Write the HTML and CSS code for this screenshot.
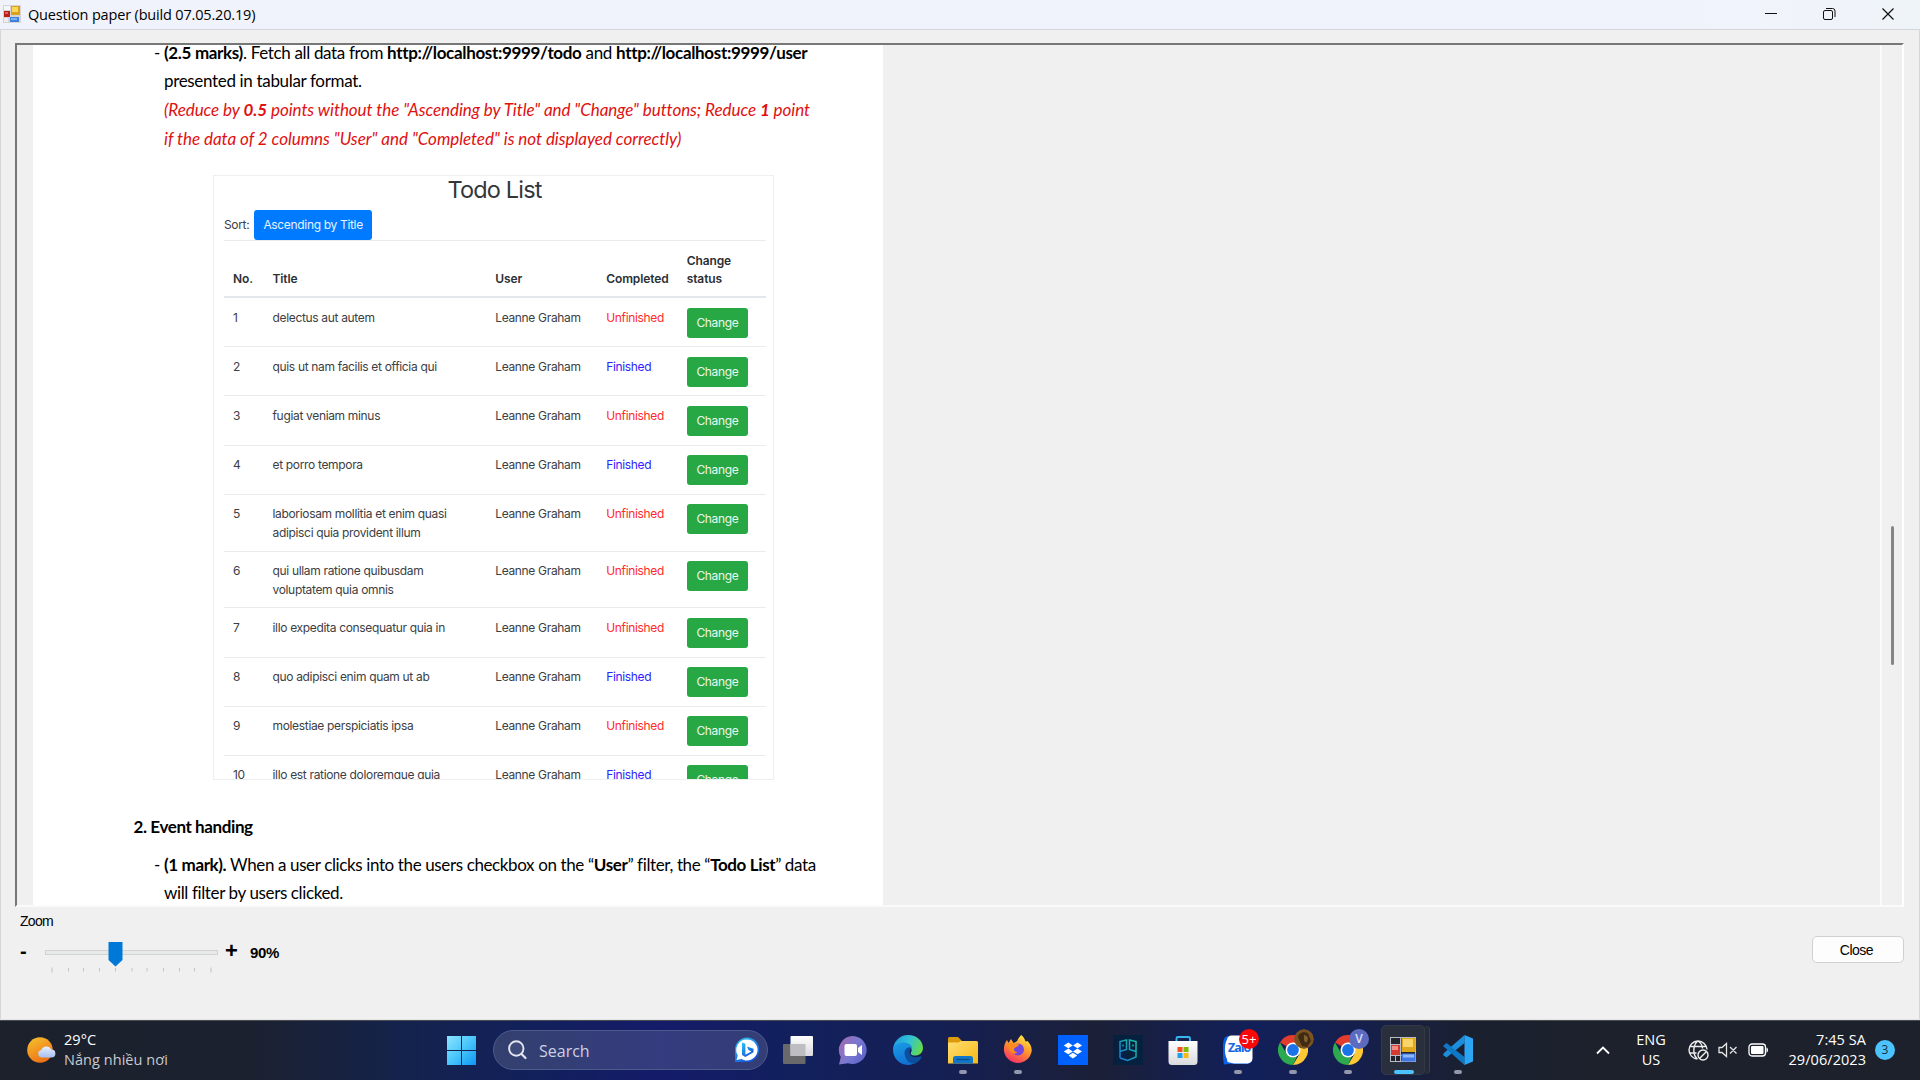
FILE: index.html
```html
<!DOCTYPE html>
<html lang="en">
<head>
<meta charset="utf-8">
<title>Question paper</title>
<link rel="stylesheet" href="styles.css">
</head>
<body>
<div class="window">
  <header class="titlebar">
    <svg class="app-icon" width="18" height="18" viewBox="0 0 18 18">
      <rect width="18" height="18" fill="#d2d4d8"/><rect x="1" y="1" width="6" height="4" fill="#f6f6f8"/><rect x="1" y="13" width="4" height="4" fill="#eee"/>
      <rect x="1" y="6" width="6" height="6" fill="#b8201c"/><rect x="2" y="7" width="3" height="2" fill="#e0645c"/>
      <rect x="8" y="1" width="9" height="9" fill="#dca31a"/><rect x="9" y="2" width="6" height="5" fill="#fbd75a"/>
      <rect x="7" y="12" width="9" height="5" fill="#3f7fe0"/><rect x="8" y="13" width="6" height="2" fill="#7fb0f6"/>
    </svg>
    <span class="caption">Question paper (build 07.05.20.19)</span>
    <svg class="winbtn" width="58" height="28" viewBox="0 0 58 28"><path d="M23 13.500h12" stroke="#111" fill="none"/></svg>
    <svg class="winbtn" width="58" height="28" viewBox="0 0 58 28"><rect x="23.5" y="10.500" width="9" height="9" rx="1.500" stroke="#111" fill="none"/><path d="M26 8.500h6.500a2.500 2.500 0 0 1 2.500 2.500v6" stroke="#111" fill="none"/></svg>
    <svg class="winbtn" width="60" height="28" viewBox="0 0 60 28"><path d="M24.500 8.500l11 11M35.500 8.500l-11 11" stroke="#111" stroke-width="1.200" fill="none"/></svg>
  </header>

  <main class="viewer">
    <div class="page">
      <div class="item first">
        <span class="dash">-</span>
        <div class="lines">
          <p class="l1"><b>(2.5 marks)</b>. Fetch all data from <b>http://localhost:9999/todo</b> and <b>http://localhost:9999/user</b></p>
          <p class="l1">presented in tabular format.</p>
          <p class="note">(Reduce by <b>0.5</b> points without the "Ascending by Title" and "Change" buttons; Reduce <b>1</b> point</p>
          <p class="note">if the data of 2 columns "User" and "Completed" is not displayed correctly)</p>
        </div>
      </div>

      <section class="figure">
        <h1>Todo List</h1>
        <div class="sort"><span>Sort:</span><span class="btn primary">Ascending by Title</span></div>
        <div class="row head"><span>No.</span><span>Title</span><span>User</span><span>Completed</span><span>Change<br>status</span></div>
        <div class="row"><span>1</span><span>delectus aut autem</span><span>Leanne Graham</span><span class="red">Unfinished</span><span class="btn">Change</span></div>
        <div class="row"><span>2</span><span>quis ut nam facilis et officia qui</span><span>Leanne Graham</span><span class="blue">Finished</span><span class="btn">Change</span></div>
        <div class="row"><span>3</span><span>fugiat veniam minus</span><span>Leanne Graham</span><span class="red">Unfinished</span><span class="btn">Change</span></div>
        <div class="row"><span>4</span><span>et porro tempora</span><span>Leanne Graham</span><span class="blue">Finished</span><span class="btn">Change</span></div>
        <div class="row tall"><span>5</span><span>laboriosam mollitia et enim quasi<br>adipisci quia provident illum</span><span>Leanne Graham</span><span class="red">Unfinished</span><span class="btn">Change</span></div>
        <div class="row tall"><span>6</span><span>qui ullam ratione quibusdam<br>voluptatem quia omnis</span><span>Leanne Graham</span><span class="red">Unfinished</span><span class="btn">Change</span></div>
        <div class="row"><span>7</span><span>illo expedita consequatur quia in</span><span>Leanne Graham</span><span class="red">Unfinished</span><span class="btn">Change</span></div>
        <div class="row"><span>8</span><span>quo adipisci enim quam ut ab</span><span>Leanne Graham</span><span class="blue">Finished</span><span class="btn">Change</span></div>
        <div class="row"><span>9</span><span>molestiae perspiciatis ipsa</span><span>Leanne Graham</span><span class="red">Unfinished</span><span class="btn">Change</span></div>
        <div class="row"><span>10</span><span>illo est ratione doloremque quia</span><span>Leanne Graham</span><span class="blue">Finished</span><span class="btn">Change</span></div>
      </section>

      <h2>2. Event handing</h2>
      <div class="item">
        <span class="dash">-</span>
        <div class="lines l2">
          <p><b>(1 mark).</b> When a user clicks into the users checkbox on the “<b>User</b>” filter, the “<b>Todo List</b>” data</p>
          <p>will filter by users clicked.</p>
        </div>
      </div>
    </div>
    <div class="scrollbar"><div class="thumb"></div></div>
  </main>

  <footer class="controls">
    <div class="zoom">
      <div class="zoom-label">Zoom</div>
      <div class="zoom-row">
        <span class="minus">-</span>
        <svg class="slider" width="174" height="34" viewBox="0 0 174 34">
          <rect x=".5" y="10.500" width="172" height="4" fill="#e7eaea" stroke="#d2d2d2"/>
          <path d="M63.500 2h14v18l-7 6.500-7-6.500z" fill="#0078d7"/>
          <path d="M7 27.500v5M166 27.500v5" stroke="#c0c0c0"/>
          <path d="M23.500 28v3.500M38.500 28v3.500M54.500 28v3.500M70.500 28v3.500M87 28v3.500M102 28v3.500M118.500 28v3.500M134.500 28v3.500M149.500 28v3.500" stroke="#c4c4c4"/>
        </svg>
        <span class="plus">+</span>
        <span class="percent">90%</span>
      </div>
    </div>
    <div class="close">Close</div>
  </footer>
</div>

<nav class="taskbar">
  <div class="weather">
    <svg width="29" height="27" viewBox="0 0 29 27">
      <defs><linearGradient id="sun" x1=".2" y1="0" x2=".7" y2="1"><stop offset="0" stop-color="#f5bd2d"/><stop offset="1" stop-color="#ee6c14"/></linearGradient><linearGradient id="cld" x1="0" y1="0" x2="0" y2="1"><stop offset="0" stop-color="#e6efff"/><stop offset="1" stop-color="#a5c0f2"/></linearGradient></defs>
      <circle cx="13" cy="13" r="12.800" fill="url(#sun)"/>
      <path d="M14.500 20.500a3.800 3.800 0 0 1-.2-7.500 5.500 5.500 0 0 1 10-.5 4 4 0 0 1 .2 8z" fill="url(#cld)"/>
    </svg>
    <div class="wtext"><span>29°C</span><span class="dim">Nắng nhiều nơi</span></div>
  </div>

  <div class="apps">
    <svg class="start" width="30" height="30" viewBox="0 0 30 30">
      <defs><linearGradient id="win" x1="0" y1="0" x2="1" y2="1"><stop offset="0" stop-color="#8fe4ff"/><stop offset=".5" stop-color="#48c6fb"/><stop offset="1" stop-color="#0f96f5"/></linearGradient></defs>
      <path d="M0 1h14v14H0zM15 1h14v14H15zM0 16h14v14H0zM15 16h14v14H15z" fill="url(#win)"/>
    </svg>
    <div class="search">
      <svg width="20" height="20" viewBox="0 0 20 20"><circle cx="8.300" cy="8.500" r="7.200" fill="#8a94c022" stroke="#e2e5f0" stroke-width="1.900"/><path d="M13.500 14l4 4" stroke="#e2e5f0" stroke-width="2.200" stroke-linecap="round"/></svg>
      <span>Search</span>
      <svg class="bing" width="26" height="26" viewBox="0 0 26 26">
        <defs><linearGradient id="bg1" x1="0" y1="0" x2=".6" y2="1"><stop offset="0" stop-color="#2fc4ee"/><stop offset="1" stop-color="#1456dc"/></linearGradient></defs>
        <path d="M13 .5a12.300 12.300 0 1 1 0 24.600H1V13A12.300 12.300 0 0 1 13 .5z" fill="url(#bg1)"/>
        <path d="M13 2.500a10.500 10.500 0 1 1-5.500 19.400L2.500 23l1.300-4.500A10.500 10.500 0 0 1 13 2.500z" fill="#fff"/>
        <path d="M8 5.500l3.400 1.200v11l6-3.300-3-1.300-1.400-3.700 6.500 2.300v3.500L11.400 20 8 18z" fill="url(#bg1)"/>
      </svg>
    </div>
    <svg class="taskview" width="30" height="28" viewBox="0 0 30 28">
      <defs><linearGradient id="tv" x1="0" y1="0" x2="0" y2="1"><stop offset="0" stop-color="#fff"/><stop offset="1" stop-color="#d9d9de"/></linearGradient></defs>
      <rect y="8" width="22.500" height="20" rx="1" fill="#69696c"/><rect x="7.500" width="22.500" height="20" rx="1" fill="url(#tv)"/><path d="M7.500 8h15v12h-15z" fill="#bebec2"/>
    </svg>
    <div class="app"><svg width="30" height="30" viewBox="0 0 30 30">
      <defs><linearGradient id="chat" x1="0" y1=".2" x2="1" y2=".8"><stop offset="0" stop-color="#a06cb0"/><stop offset=".5" stop-color="#7a78d2"/><stop offset="1" stop-color="#5b62c8"/></linearGradient></defs>
      <path d="M15 1a14 14 0 1 1-5 27.200L1 29.500 2.800 22A14 14 0 0 1 15 1z" fill="url(#chat)"/><rect x="6.500" y="9" width="12.500" height="12" rx="2" fill="#fff"/><path d="M20 13l4-3v10l-4-3z" fill="#fff"/>
    </svg></div>
    <div class="app"><svg width="30" height="30" viewBox="0 0 30 30">
      <defs><linearGradient id="e1" x1="0" y1=".3" x2="1" y2=".6"><stop offset="0" stop-color="#1f9be0"/><stop offset=".5" stop-color="#33c3d4"/><stop offset="1" stop-color="#65dc45"/></linearGradient><linearGradient id="e2" x1=".2" y1="0" x2=".6" y2="1"><stop offset="0" stop-color="#1a9be6"/><stop offset="1" stop-color="#0f6fd0"/></linearGradient></defs>
      <path d="M11 11c-3 7 1 17 10 18 3-1 6-3.500 7.500-6.500.5-1-.5-1.500-1.500-1-5 2-10.500 0-10.500-4.500 0-2 1-3 2-4z" fill="#0c4f9e"/>
      <path d="M0 15A15 15 0 0 1 15 0c9 0 15 6 15 13 0 5-4 7.500-8 7.500-3.500 0-5-1.500-4-3 2-3.500-.5-7.500-5-7.500-5 0-11 1.500-13 5z" fill="url(#e1)"/>
      <path d="M0 15C1 9.500 6 7.500 10.500 7.500c5 0 8.500 2.500 8.500 6-2.500-2.500-7.500-.5-7.500 4.500 0 6 5 11 10 10.500A15 15 0 0 1 0 15z" fill="url(#e2)"/>
    </svg></div>
    <div class="app run"><svg width="30" height="30" viewBox="0 0 30 30">
      <defs><linearGradient id="fo" x1="0" y1="0" x2="1" y2="1"><stop offset="0" stop-color="#ffdf74"/><stop offset="1" stop-color="#f8b813"/></linearGradient></defs>
      <path d="M0 3.500A1.500 1.500 0 0 1 1.500 2H10l4 4-3 4H0z" fill="#dd9b0c"/><path d="M0 7.500h10.500L13 6h15.500A1.500 1.500 0 0 1 30 7.500V28.500H0z" fill="url(#fo)"/><path d="M5 28.500v-5A2.500 2.500 0 0 1 7.500 21h15a2.500 2.500 0 0 1 2.500 2.500v5z" fill="#1277c8"/><path d="M8.500 24.500h13" stroke="#084d8c" stroke-width="1.300"/>
    </svg></div>
    <div class="app run"><svg width="30" height="30" viewBox="0 0 30 30">
      <defs><linearGradient id="ff" x1=".8" y1="0" x2=".3" y2="1"><stop offset="0" stop-color="#fff04a"/><stop offset=".45" stop-color="#ff9a2c"/><stop offset="1" stop-color="#fb2f65"/></linearGradient></defs>
      <path d="M18 0c2 1 3.500 3.500 4.500 6.500l2-.5c2.500 2.500 4.500 6 4.200 10A14 14 0 0 1 1 16C.5 11.500 2 7.500 4 5l1.500 3L8 4l2.500 4c2.500-1 4-1.500 4.500-4z" fill="url(#ff)"/>
      <circle cx="15" cy="14.500" r="6" fill="#7546dc"/><path d="M4.500 8.500C7 7.500 9 7.500 11 8.500l5 .5c-.5 2.500-3 3-4.500 4-1.500 1.500 0 4 3 4.500-4 3-9-.5-10-9z" fill="#ff8a1e"/>
    </svg></div>
    <div class="app"><svg width="30" height="30" viewBox="0 0 30 30">
      <rect width="30" height="30" fill="#0061fe"/><path d="M10.300 7.500l4.500 2.900-4.500 2.900-4.500-2.900zM19.500 7.500l4.500 2.900-4.500 2.900-4.500-2.900zM10.300 13.500l4.500 2.900-4.500 2.900-4.500-2.900zM19.500 13.500l4.500 2.900-4.500 2.900-4.500-2.900zM14.900 17.800l4.300 2.800-4.300 2.900-4.300-2.900z" fill="#fff"/>
    </svg></div>
    <div class="app"><svg width="30" height="30" viewBox="0 0 30 30">
      <defs><linearGradient id="pg" x1="0" y1="1" x2="1" y2="0"><stop offset="0" stop-color="#2273d8"/><stop offset=".6" stop-color="#16a4b4"/><stop offset="1" stop-color="#1cc5a0"/></linearGradient></defs>
      <rect width="30" height="30" fill="#05213f"/><path d="M7 23V6.500L13.500 5v9.500L7 16.500M7 23l7.500 2.500L23 22V6.500L16.500 5v9.500l6.500 2M10 9.500v2M20 9.500v2" fill="none" stroke="url(#pg)" stroke-width="1.500"/>
    </svg></div>
    <div class="app"><svg width="30" height="30" viewBox="0 0 30 30">
      <defs><linearGradient id="st" x1="0" y1="0" x2="0" y2="1"><stop offset="0" stop-color="#fff"/><stop offset="1" stop-color="#d8dadd"/></linearGradient></defs>
      <path d="M8.500 7V3.500A1.500 1.500 0 0 1 10 2h10.500A1.500 1.500 0 0 1 22 3.500V7" fill="none" stroke="#35b7ee" stroke-width="1.900"/><path d="M.5 6h29v20.500A3.500 3.500 0 0 1 26 30H4A3.500 3.500 0 0 1 .5 26.500z" fill="url(#st)"/>
      <path d="M9.500 12h5v5h-5z" fill="#f1511b"/><path d="M15.500 12h5v5h-5z" fill="#80bb03"/><path d="M9.500 18h5v5h-5z" fill="#1ba0ec"/><path d="M15.500 18h5v5h-5z" fill="#fbb812"/>
    </svg></div>
    <div class="app run">
      <svg width="30" height="30" viewBox="0 0 30 30"><path d="M6 1h18a5 5 0 0 1 5 5v18a5 5 0 0 1-5 5H6l-5 .5C-.5 22-.5 8 1 4a5 5 0 0 1 5-3z" fill="#0b62e6"/><path d="M8.500.5h16a5 5 0 0 1 5 5v18a5 5 0 0 1-5 5H11L4.500 27 4 24C1.500 20 1 10 4 4.500A5 5 0 0 1 8.500.5z" fill="#fff"/></svg>
      <span class="zalo">Zalo</span><span class="badge red-badge">5+</span>
    </div>
    <div class="app run">
      <svg width="30" height="30" viewBox="0 0 30 30"><path d="M15 15L2 7.500A15 15 0 0 1 28 7.500H15z" fill="#e33b2e"/><path d="M15 15V7.500h13A15 15 0 0 1 15 30l6.500-11z" fill="#fcc934"/><path d="M15 30A15 15 0 0 1 2 7.500l6.500 11.250 6.500 3.700 4-1.200z" fill="#2da94f"/><circle cx="15" cy="15" r="7.500" fill="#fff"/><circle cx="15" cy="15" r="5.900" fill="#1a73e8"/></svg>
      <svg class="badge" width="20" height="20" viewBox="0 0 20 20"><circle cx="10" cy="10" r="10" fill="#7a5320"/><path d="M4 8c1-6 11-6 11-1l2 5-4 6-5-1-2-4z" fill="#3f2a12"/><path d="M10 6c2 0 3 1 4 3l-1 4c-2 1-3-1-3-3z" fill="#80602f"/></svg>
    </div>
    <div class="app run">
      <svg width="30" height="30" viewBox="0 0 30 30"><path d="M15 15L2 7.500A15 15 0 0 1 28 7.500H15z" fill="#e33b2e"/><path d="M15 15V7.500h13A15 15 0 0 1 15 30l6.500-11z" fill="#fcc934"/><path d="M15 30A15 15 0 0 1 2 7.500l6.500 11.250 6.500 3.700 4-1.200z" fill="#2da94f"/><circle cx="15" cy="15" r="7.500" fill="#fff"/><circle cx="15" cy="15" r="5.900" fill="#1a73e8"/></svg>
      <span class="badge v-badge">V</span>
    </div>
    <div class="app active">
      <svg width="30" height="30" viewBox="0 0 30 30"><rect x="2.500" y="2.500" width="25" height="24" fill="#22242d" stroke="#b8bcc4"/><path d="M12.500 2v25M2 9.500h11M2 20.500h25M7.500 20.500V27" stroke="#b8bcc4"/><rect x="13.500" y="3" width="14" height="14" fill="#e0a81c"/><rect x="15" y="4" width="10" height="8" fill="#f8d46a"/><rect x="3" y="10" width="9" height="10" fill="#d43a30"/><rect x="4" y="11" width="6" height="4" fill="#f08d84"/><rect x="13.500" y="18.500" width="14" height="8" fill="#3f78e6"/><rect x="15" y="19.500" width="11" height="3" fill="#8fb8fa"/></svg>
    </div>
    <div class="app run"><svg width="30" height="30" viewBox="0 0 30 30"><path d="M21.500 0v8L3.500 22.500 0 20l1-2z" fill="#1c8fdc"/><path d="M3.500 8L21.500 22v8L0 11z" fill="#0f78c4"/><path d="M21.500 0L30 3.500v23L21.500 30z" fill="#2ca5f5"/></svg></div>
  </div>

  <div class="tray">
    <svg class="chev" width="14" height="9" viewBox="0 0 14 9"><path d="M1 7.500l6-6 6 6" fill="none" stroke="#fff" stroke-width="1.800"/></svg>
    <div class="lang"><span>ENG</span><span>US</span></div>
    <svg class="globe" width="21" height="21" viewBox="0 0 21 21" fill="none" stroke="#eee" stroke-width="1.400"><path d="M9.500 19A9 9 0 1 1 19 9.500M9.500 19C4.500 15 4.500 5 10 1c3 2 4.500 5 4.500 7.500M2 6.500h16M1.500 13h7"/><circle cx="15" cy="15" r="5"/><path d="M11.500 18.500l7-7"/></svg>
    <svg class="spk" width="20" height="16" viewBox="0 0 20 16" fill="none" stroke="#e4e4e4" stroke-width="1.300"><path d="M1 5.500h3L8.500 1.500v13L4 10.500H1zM12 5l6.500 6.500M18.500 5L12 11.500"/></svg>
    <svg class="bat" width="21" height="14" viewBox="0 0 21 14"><rect x="1" y="1" width="16.500" height="12" rx="3" fill="none" stroke="#fff" stroke-width="1.300"/><rect x="3" y="3" width="12.500" height="8" rx="1" fill="#fff"/><path d="M18.500 4.500c2 .5 2 4.500 0 5z" fill="#fff"/></svg>
    <div class="clock"><span>7:45 SA</span><span>29/06/2023</span></div>
    <span class="count">3</span>
  </div>
</nav>
</body>
</html>
```
FILE: styles.css
```css
* { box-sizing: border-box; }
body { margin: 0; width: 1920px; height: 1080px; overflow: hidden; display: flex; flex-direction: column; background: #f0f0f0; color: #000; font-family: "Open Sans", "Noto Sans", sans-serif; }
p, h1, h2 { margin: 0; font-weight: normal; white-space: nowrap; }
svg { display: block; flex: none; }

.window { height: 1020px; display: flex; flex-direction: column; border-bottom: 1px solid #e4e4e4; box-shadow: inset 1px 0 #d6d6d6, inset -1px 0 #d6d6d6; }
.titlebar { height: 30px; flex: none; display: flex; align-items: flex-start; padding: 0 2px 0 3px; background: linear-gradient(90deg, #f0f3fb 0 88%, #eff4f9); border-bottom: 1px solid #d3d5d9; }
.app-icon { margin-top: 5px; }
.caption { flex: 1; padding-left: 7px; font-size: 14.5px; line-height: 29px; letter-spacing: -.17px; white-space: nowrap; }

.viewer { height: 864px; flex: none; margin: 13px 16px 0 15px; display: flex; justify-content: space-between; overflow: hidden; background: #f0f0f0; border: 2px solid; border-color: #777 #fff #fafafa #777; }
.page { width: 850px; margin-left: 15.500px; flex: none; background: #fff; font-family: Lato, sans-serif; font-size: 17px; line-height: 28.6px; }
.item { display: flex; padding-left: 121.500px; }
.item.first { margin-top: -6.200px; }
.dash { width: 10px; }
.l1 { letter-spacing: -.335px; }
.note { letter-spacing: -.06px; color: #e01010; font-style: italic; }
.note + .note { letter-spacing: -.03px; }
.l2 { letter-spacing: -.375px; }
h2 { margin: 33px 0 9px 101px; font-size: 17px; line-height: 28.6px; font-weight: bold; letter-spacing: -.4px; }

.figure { width: 561px; height: 605.200px; margin: 21.800px 0 0 180px; padding: 0 6.500px 0 10.500px; overflow: hidden; border: 1.500px solid #eeeff0; font: 12px/18.8px Inter, sans-serif; letter-spacing: -.33px; color: #3c4044; }
h1 { height: 34.300px; padding: 0 1px 0 0; text-align: center; font-size: 23.500px; line-height: 28px; letter-spacing: -.82px; color: #32373c; }
.sort { display: flex; height: 30px; line-height: 29px; }
.btn { display: block; width: 61.500px; height: 30px; border-radius: 3px; background: #28a745; color: #eaf8ed; text-align: center; line-height: 30.600px; }
.row .btn { margin-top: -1px; }
.btn.primary { width: 118.500px; margin-left: 4.500px; background: #007bff; color: #e6f2ff; }
.row { display: grid; grid-template-columns: 39.5px 222.700px 111px 80.500px 79px; height: 49.1px; padding: 10.300px 0 0 9px; border-top: 1px solid #e9ecef; white-space: nowrap; align-items: start; }
.head + .row { border-top: 0; height: 48.1px; }
.row.tall { height: 56.9px; }
.row.head { height: 58px; border-bottom: 2px solid #e4e7ee; align-items: end; padding: 9px 0 7.200px 9px; font-weight: 600; letter-spacing: -.1px; color: #2b3035; }
.row .red { color: #ff2a2a; }
.row .blue { color: #2c22ff; }

.scrollbar { width: 22px; flex: none; border-left: 2px solid #fafafa; padding: 481px 0 0 9px; }
.thumb { width: 3px; height: 139px; border-radius: 2px; background: #858585; }

.controls { flex: 1; display: flex; justify-content: space-between; padding: 5px 16px 0 20px; font-family: "Liberation Sans", sans-serif; font-size: 14px; }
.zoom-label { line-height: 19px; letter-spacing: -.7px; }
.zoom-row { display: flex; margin-top: 9px; font-weight: bold; }
.minus { width: 25px; font-size: 20px; line-height: 22px; }
.plus { width: 26px; padding-left: 6px; font-size: 22px; line-height: 21px; }
.percent { padding-left: 5px; line-height: 26px; font-size: 15px; letter-spacing: -.4px; }
.close { width: 92px; height: 27px; margin-top: 24px; border: 1px solid #d0d0d0; border-radius: 5px; background: #fdfdfd; text-align: center; line-height: 27px; letter-spacing: -.5px; padding-right: 3px; }

.taskbar { height: 60px; flex: none; display: flex; align-items: center; justify-content: space-between; color: #fff; background: linear-gradient(90deg, #1c212c 0, #1b212f 250px, #14234c 400px, #12205c 540px, #141c6a 660px, #12205c 800px, #151f52 950px, #1b2037 1100px, #161f48 1170px, #12205a 1250px, #151f4c 1360px, #1b202f 1470px, #1c212c 1600px); border-top: 1px solid #4a4d52; padding: 0 25px 1px 27px; }
.weather, .apps, .tray { display: flex; align-items: center; }
.weather { width: 420px; }
.wtext { display: flex; flex-direction: column; margin-left: 8px; font-size: 14.5px; line-height: 20px; letter-spacing: .05px; }
.wtext, .clock { margin-top: -1px; }
.dim { color: #c9cbd0; }
.apps { flex: 1; }
.search { width: 275px; height: 40px; margin: 0 15px 0 16px; padding: 0 7px 0 14px; display: flex; align-items: center; border: 1px solid #4d5a8c; border-radius: 20px; background: rgba(255, 255, 255, .14); font-size: 16px; color: #cdd1e2; }
.search span { flex: 1; padding: 2px 0 0 11px; }
.taskview { margin-right: 15px; }
.app { position: relative; width: 50px; height: 50px; margin-right: 5px; display: flex; align-items: center; justify-content: center; flex: none; }
.run::after, .active::after { content: ""; position: absolute; bottom: 1px; left: 21px; width: 8px; height: 4px; border-radius: 2px; background: #9297ac; }
.active { width: 44px; margin: 0 8px 0 3px; border: 1px solid #343948; border-radius: 5px; background: #2a2f3d; box-shadow: 5px 0 0 -1px #252a38, 6px 0 0 -1px #3a3f4c; }
.active::after { left: 12px; bottom: 0; width: 20px; background: #4cc2ff; }
.zalo { position: absolute; left: 15px; top: 12px; font: bold 12.500px/22px "Open Sans", sans-serif; color: #1668e3; letter-spacing: -1px; }
.badge { position: absolute; left: 26px; top: 4px; width: 20px; height: 20px; border-radius: 50%; text-align: center; line-height: 20px; }
.red-badge { background: #f90808; font-size: 13px; }
.v-badge { background: #5c6bc0; font-size: 12px; font-weight: 600; color: #dde1f6; }

.tray { font-size: 14.5px; line-height: 20px; }
.lang, .clock { display: flex; flex-direction: column; }
.lang { width: 32px; margin-left: 25px; margin-right: 21px; align-items: center; }
.chev { margin-left: -1px; }
.globe { margin-right: 9px; }
.spk { margin-right: 10px; }
.clock { width: 97px; align-items: flex-end; margin-right: 9px; letter-spacing: .05px; }
.count { width: 20px; height: 20px; border-radius: 50%; background: #4cc2ff; color: #14303f; text-align: center; font-size: 12px; line-height: 20px; }
```
